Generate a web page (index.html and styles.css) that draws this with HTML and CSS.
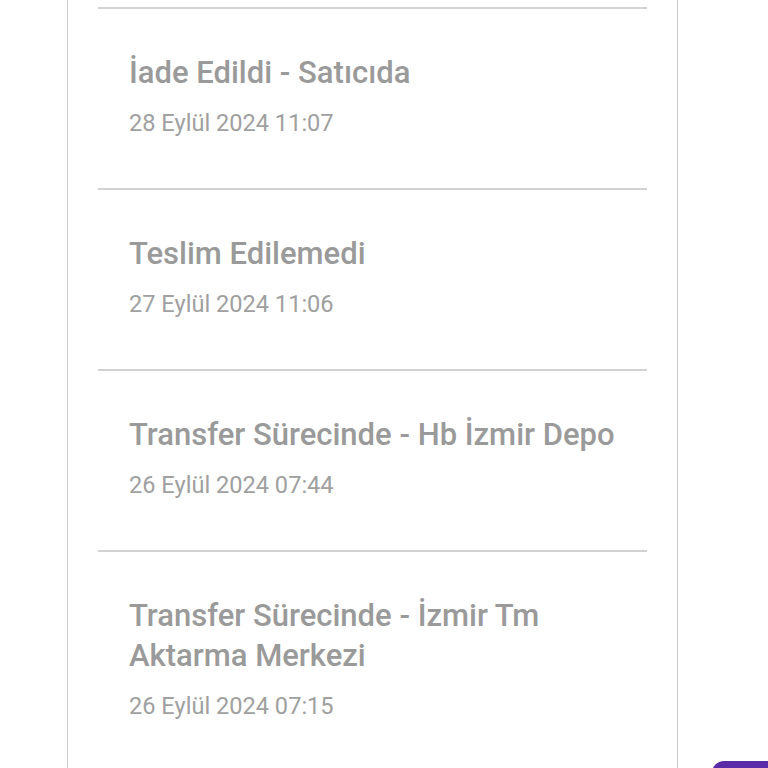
FILE: index.html
```html
<!DOCTYPE html>
<html lang="tr">
<head>
  <meta charset="UTF-8" />
  <meta name="viewport" content="width=device-width, initial-scale=1.0"/>
  <title>Kargo Hareketleri</title>
  <link rel="stylesheet" href="styles.css">
</head>
<body>
<div class="track-card">
  <ul class="track-list">
    <li class="track-item">
      <div class="track-title">İade Edildi - Satıcıda</div>
      <div class="track-date">28 Eylül 2024 11:07</div>
    </li>
    <li class="track-item">
      <div class="track-title">Teslim Edilemedi</div>
      <div class="track-date">27 Eylül 2024 11:06</div>
    </li>
    <li class="track-item">
      <div class="track-title">Transfer Sürecinde - Hb İzmir Depo</div>
      <div class="track-date">26 Eylül 2024 07:44</div>
    </li>
    <li class="track-item">
      <div class="track-title">Transfer Sürecinde - İzmir Tm Aktarma Merkezi</div>
      <div class="track-date">26 Eylül 2024 07:15</div>
    </li>
  </ul>
</div>

<!-- floating action button, only its top edge shows -->
<div class="fab"></div>
</body>
</html>
```

FILE: styles.css
```css
body {
  margin: 0;
  background: #fff;
  font-family: Roboto, "Liberation Sans", sans-serif;
  overflow: hidden;
}
.track-card {
  width: 609px;
  margin-left: 67px;
  padding-top: 7px;
  border-left: 1px solid #cccccc;
  border-right: 1px solid #cccccc;
  min-height: 761px;
}
.track-list {
  list-style: none;
  margin: 0 30px;
  padding: 0;
}
.track-item {
  border-top: 2px solid #d2d2d2;
  padding: 44px 20px 50px 31px;
}
.track-title {
  font-size: 31px;
  line-height: 40px;
  font-weight: 500;
  color: #9a9a9a;
}
.track-date {
  margin-top: 15px;
  font-size: 23.6px;
  line-height: 30px;
  color: #a0a0a0;
}

.fab {
  position: fixed;
  left: 712px;
  top: 761px;
  width: 80px;
  height: 60px;
  background: #5b2aa6;
  border-radius: 12px;
}
```
